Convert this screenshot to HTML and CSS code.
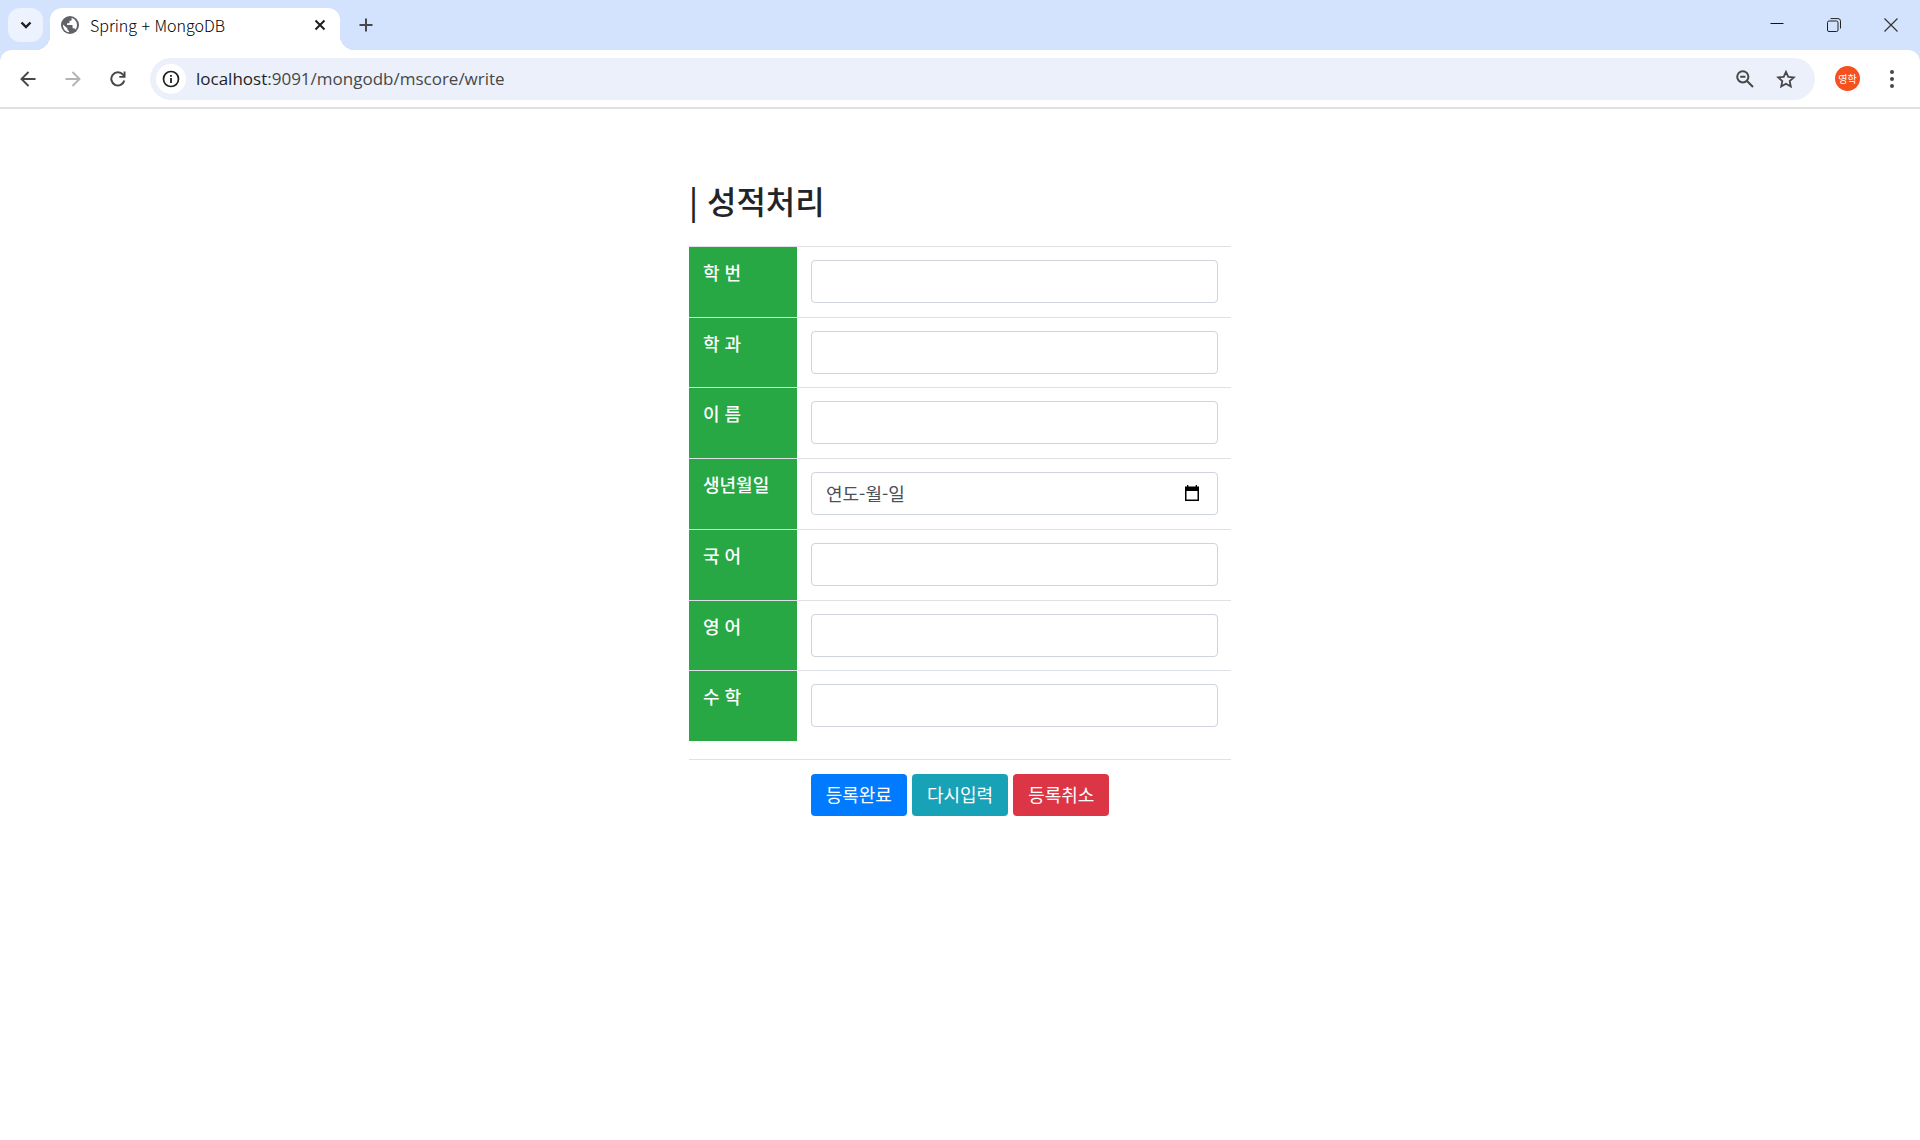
FILE: index.html
```html
<!DOCTYPE html>
<html lang="ko">
<head>
<meta charset="utf-8">
<meta name="viewport" content="width=device-width, initial-scale=1">
<title>Spring + MongoDB</title>
<link rel="stylesheet" href="styles.css">
</head>
<body>
<header class="browser">
  <div class="tabstrip">
    <button class="tab-search" type="button" aria-label="탭 검색">
      <svg width="12" height="8" viewBox="0 0 12 8"><path d="M1.5 1.5 6 6l4.500-4.500" fill="none" stroke="#1f1f1f" stroke-width="2.400"/></svg>
    </button>
    <div class="tab">
      <svg class="favicon" width="18" height="18" viewBox="0 0 18 18"><circle cx="9" cy="9" r="9" fill="#5f6368"/><path d="M2 8.500l4.500 4v1.500l1.500 1v1.200C4.500 16 1.800 13 2 8.500zM10.500 2c3 .5 5.500 3.500 5.500 7 0 1.800-.6 3.400-1.700 4.600-.3-.9-1-1.400-1.900-1.400h-.8V10c0-.6-.4-1-1-1H6V7.300h1.500c.6 0 1-.4 1-1V4.800h1c.7 0 1.200-.6 1.200-1.300z" fill="#fff"/></svg>
      <span class="tab-title">Spring + MongoDB</span>
      <button class="icon-button" type="button" aria-label="탭 닫기">
        <svg width="12" height="12" viewBox="0 0 12 12"><path d="M1.500 1.500l9 9m0-9l-9 9" stroke="#1f1f1f" stroke-width="2"/></svg>
      </button>
    </div>
    <button class="icon-button new-tab" type="button" aria-label="새 탭">
      <svg width="14" height="14" viewBox="0 0 14 14"><path d="M7 0.500v13M.5 7h13" stroke="#474747" stroke-width="2"/></svg>
    </button>
    <div class="window-controls">
      <button class="icon-button" type="button" aria-label="최소화">
        <svg width="14" height="14" viewBox="0 0 14 14"><path d="M.5 5.500h13" stroke="#111" stroke-width="1"/></svg>
      </button>
      <button class="icon-button" type="button" aria-label="이전 크기로 복원">
        <svg width="14" height="14" viewBox="0 0 14 14" fill="none" stroke="#222"><rect x=".5" y="3" width="10.500" height="10.500" rx="1.500"/><path d="M3.500.6H11a2.500 2.500 0 0 1 2.500 2.500v7.400"/></svg>
      </button>
      <button class="icon-button" type="button" aria-label="닫기">
        <svg width="14" height="14" viewBox="0 0 14 14"><path d="M.5.5l13 13m0-13l-13 13" stroke="#333" stroke-width="1.200"/></svg>
      </button>
    </div>
  </div>
  <div class="toolbar">
    <div class="nav-buttons">
      <button class="icon-button" type="button" aria-label="뒤로">
        <svg width="16" height="16" viewBox="0 0 16 16" fill="none" stroke="#474747" stroke-width="1.900"><path d="M15.500 8H2M8.500 1L1.500 8l7 7"/></svg>
      </button>
      <button class="icon-button" type="button" aria-label="앞으로" disabled>
        <svg width="16" height="16" viewBox="0 0 16 16" fill="none" stroke="#b3b3b3" stroke-width="1.900"><path d="M.5 8H14M7.500 1l7 7-7 7"/></svg>
      </button>
      <button class="icon-button" type="button" aria-label="새로고침">
        <svg width="16" height="16" viewBox="0 0 16 16"><path d="M14.300 9.500A6.600 6.600 0 1 1 13 3.700l1.500 1.600" fill="none" stroke="#474747" stroke-width="2"/><path d="M15.500.5v6.300H9.300V5h4.300V.5z" fill="#474747"/></svg>
      </button>
    </div>
    <div class="omnibox">
      <button class="site-info" type="button" aria-label="사이트 정보 보기">
        <svg width="18" height="18" viewBox="0 0 18 18"><circle cx="9" cy="9" r="7.500" fill="none" stroke="#1f1f1f" stroke-width="1.700"/><path d="M8.100 8h1.800v5H8.100zM8.100 5h1.800v1.800H8.100z" fill="#1f1f1f"/></svg>
      </button>
      <div class="url"><span class="host">localhost</span>:9091/mongodb/mscore/write</div>
      <button class="icon-button" type="button" aria-label="확대/축소">
        <svg width="18" height="18" viewBox="0 0 18 18" fill="none" stroke="#474747" stroke-width="2"><circle cx="6.800" cy="6.800" r="5.600"/><path d="M11 11l6 6M4.200 6.800h5.200"/></svg>
      </button>
      <button class="icon-button star" type="button" aria-label="북마크 추가">
        <svg width="20" height="18" viewBox="0 0 20 18"><path d="M10 1.800l2.300 5 5.500.6-4.100 3.700 1.100 5.400L10 13.800l-4.800 2.700 1.100-5.400-4.100-3.700 5.500-.6z" fill="none" stroke="#474747" stroke-width="1.800"/></svg>
      </button>
    </div>
    <button class="profile" type="button" aria-label="프로필">영학</button>
    <button class="icon-button menu" type="button" aria-label="메뉴">
      <svg width="4" height="18" viewBox="0 0 4 18" fill="#474747"><circle cx="2" cy="2" r="2"/><circle cx="2" cy="9" r="2"/><circle cx="2" cy="16" r="2"/></svg>
    </button>
  </div>
</header>
<main class="container">
  <h1 class="title">| 성적처리</h1>
  <form>
    <table class="fields">
      <tr><th scope="row"><label for="hakbun">학 번</label></th><td><input class="field" id="hakbun" type="text"></td></tr>
      <tr><th scope="row"><label for="dept">학 과</label></th><td><input class="field" id="dept" type="text"></td></tr>
      <tr><th scope="row"><label for="name">이 름</label></th><td><input class="field" id="name" type="text"></td></tr>
      <tr><th scope="row"><label for="birth">생년월일</label></th><td>
        <div class="field date">
          <input class="date-text" id="birth" type="text" placeholder="연도-월-일">
          <button class="icon-button" type="button" aria-label="날짜 선택">
            <svg width="16" height="16" viewBox="0 0 16 16"><path d="M1 1.500h2V0h1.300v1.500h7.400V0H13v1.500h2V16H1zM2.500 6v8.500h11V6z" fill="#000" fill-rule="evenodd"/></svg>
          </button>
        </div>
      </td></tr>
      <tr><th scope="row"><label for="kor">국 어</label></th><td><input class="field" id="kor" type="text"></td></tr>
      <tr><th scope="row"><label for="eng">영 어</label></th><td><input class="field" id="eng" type="text"></td></tr>
      <tr><th scope="row"><label for="mat">수 학</label></th><td><input class="field" id="mat" type="text"></td></tr>
    </table>
    <div class="actions">
      <button class="btn primary" type="submit">등록완료</button>
      <button class="btn info" type="reset">다시입력</button>
      <button class="btn danger" type="button">등록취소</button>
    </div>
  </form>
</main>
</body>
</html>
```
FILE: styles.css
```css
* { box-sizing: border-box; }

body {
  margin: 0;
  background: #fff;
  color: #212529;
  font-family: "Noto Sans CJK KR", sans-serif;
  font-size: 18px;
  line-height: 24px;
}

button, input { font: inherit; color: inherit; }
button { cursor: pointer; }
svg { display: block; }

.icon-button {
  display: flex;
  padding: 0;
  border: 0;
  background: none;
}

/* Browser frame */
.browser {
  background: #d3e3fd;
  border-bottom: 2px solid #e1e1e1;
}

.tabstrip {
  display: flex;
  align-items: flex-start;
  height: 50px;
  padding: 8px 16px 0 8px;
}

.tab-search {
  display: grid;
  place-items: center;
  width: 35px;
  height: 34px;
  padding: 0;
  border: 0;
  border-radius: 12px;
  background: #ecf2fe;
}

.tab {
  position: relative;
  display: flex;
  align-items: center;
  gap: 11px;
  width: 290px;
  height: 42px;
  margin-left: 7px;
  padding: 0 14px 8px 11px;
  border-radius: 12px 12px 0 0;
  background: #fff;
}

.tab::before,
.tab::after {
  content: "";
  position: absolute;
  bottom: 0;
  width: 14px;
  height: 14px;
}
.tab::before {
  right: 100%;
  background: radial-gradient(circle at 0 0, transparent 14px, #fff 14px);
}
.tab::after {
  left: 100%;
  background: radial-gradient(circle at 100% 0, transparent 14px, #fff 14px);
}

.tab-title {
  flex: 1;
  color: #000;
  font-size: 16px;
  font-weight: 300;
  white-space: nowrap;
}

.new-tab { margin: 10px 0 0 19px; }

.window-controls {
  display: flex;
  gap: 43px;
  margin: 10px 6px 0 auto;
}

.toolbar {
  display: flex;
  align-items: center;
  height: 57px;
  padding: 0 26px 0 20px;
  border-radius: 12px 12px 0 0;
  background: #fff;
}

.nav-buttons { display: flex; gap: 29px; }

.omnibox {
  display: flex;
  flex: 1;
  align-items: center;
  height: 42px;
  margin-left: 24px;
  padding: 0 19px 0 6px;
  border-radius: 21px;
  background: #ebf0fa;
}

.site-info {
  display: grid;
  place-items: center;
  width: 30px;
  height: 30px;
  padding: 0;
  border: 0;
  border-radius: 50%;
  background: #fff;
}

.url {
  flex: 1;
  margin-left: 10px;
  color: #474747;
  font-family: "Open Sans", "Noto Sans", sans-serif;
  font-size: 17px;
}
.host { color: #1f1f1f; }
.star { margin-left: 22px; }

.profile {
  width: 25px;
  height: 25px;
  margin-left: 20px;
  padding: 0;
  border: 0;
  border-radius: 50%;
  background: #f4511e;
  color: #fff;
  font-size: 10px;
}
.menu { margin-left: 30px; }

/* Score form */
.container {
  width: 542px;
  max-width: 100%;
  margin: 0 auto;
  padding-top: 73px;
}

.title {
  margin: 0 0 28px;
  font-size: 32px;
  font-weight: 500;
  line-height: 36px;
}

.fields {
  width: 100%;
  height: 495px;
  border-collapse: separate;
  border-spacing: 0;
}

.fields th,
.fields td {
  padding: 13px 13px 12px 14px;
  border-top: 1px solid #dee2e6;
  vertical-align: top;
}
.fields th {
  width: 108px;
  background: #28a745;
  color: #fff;
  font-weight: 500;
  text-align: left;
}

.field {
  display: block;
  width: 100%;
  height: 43px;
  padding: 6px 14px;
  border: 1px solid #ced4da;
  border-radius: 4px;
  background: #fff;
  color: #495057;
}

.date {
  display: flex;
  align-items: center;
  padding: 4px 17px 6px 14px;
}
.date-text {
  flex: 1;
  min-width: 0;
  padding: 0;
  border: 0;
  outline: 0;
  background: none;
}
.date-text::placeholder { color: #495057; }

.actions {
  display: flex;
  justify-content: center;
  gap: 5px;
  margin-top: 18px;
  padding-top: 14px;
  border-top: 1px solid #dee2e6;
}

.btn {
  height: 42px;
  padding: 0 15px 2px;
  border: 0;
  border-radius: 4px;
  color: #fff;
}
.primary { background: #007bff; }
.info { background: #17a2b8; }
.danger { background: #dc3545; }
```
